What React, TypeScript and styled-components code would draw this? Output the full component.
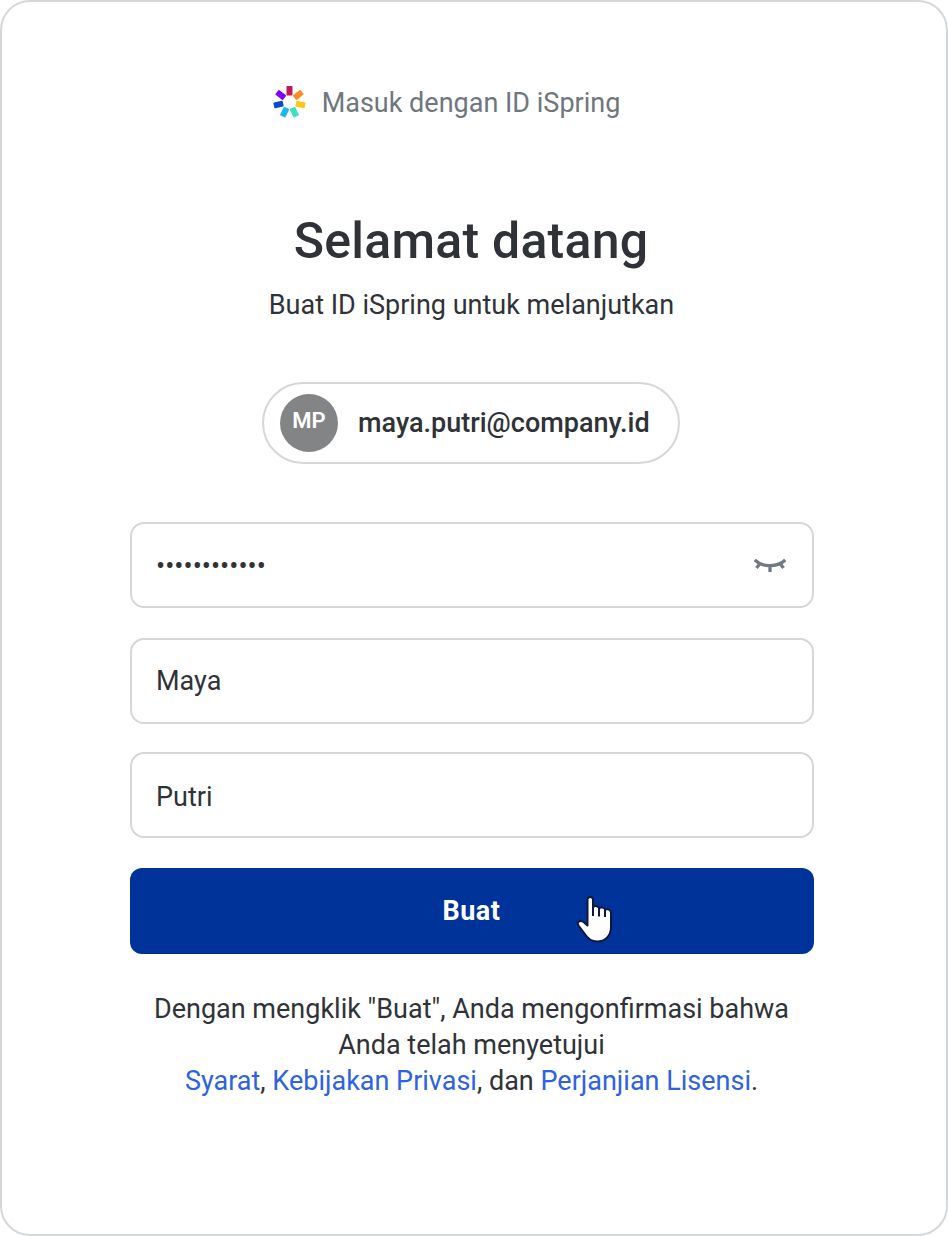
import { FC } from "react";
import styled, { createGlobalStyle } from "styled-components";

const GlobalStyle = createGlobalStyle`
  *, *::before, *::after {
    box-sizing: border-box;
  }

  body {
    margin: 0;
    background: #fff;
    color: #2f3337;
    font-family: Roboto, "Liberation Sans", sans-serif;
    font-size: 27px;
  }
`;

const Card = styled.main`
  width: 948px;
  height: 1236px;
  padding: 81px 133px 0 127px;
  border: 2px solid #d6d7d8;
  border-radius: 30px;
  background: #fff;
  display: flex;
  flex-direction: column;
  align-items: center;
`;

const Brand = styled.div`
  display: flex;
  align-items: center;
  gap: 16px;
  height: 40px;
  margin-right: 50px;
  color: #6f767e;
`;

const Text = styled.span<{ spacing?: number }>`
  white-space: nowrap;
  letter-spacing: ${props => props.spacing || 0}px;
`;

const Title = styled.h1`
  margin: 88px 0 0;
  font-size: 50px;
  font-weight: 500;
  line-height: 60px;
`;

const Subtitle = styled.p`
  margin: 16px 0 0;
  padding-left: 1px;
  line-height: 36px;
`;

const Account = styled.div`
  display: flex;
  align-items: center;
  width: 418px;
  height: 82px;
  margin-top: 59px;
  padding-left: 16px;
  border: 2px solid #d6d7d8;
  border-radius: 41px;
  font-weight: 500;
`;

const Avatar = styled.div`
  width: 58px;
  height: 58px;
  margin-right: 20px;
  padding-bottom: 5px;
  border-radius: 50%;
  background: #838485;
  color: #fff;
  font-size: 22px;
  font-weight: 600;
  display: flex;
  align-items: center;
  justify-content: center;
`;

const Form = styled.form`
  display: flex;
  flex-direction: column;
  width: 684px;
  margin: 58px 0 0 2px;
`;

const Field = styled.label<{ gap?: number; drop?: number }>`
  display: flex;
  align-items: center;
  height: 86px;
  margin-bottom: ${props => props.gap || 30}px;
  padding: ${props => props.drop || 0}px 26px 0 24px;
  border: 2px solid #d6d7d8;
  border-radius: 14px;
`;

const Input = styled.input`
  flex: 1;
  min-width: 0;
  padding: 0;
  border: 0;
  outline: 0;
  background: none;
  color: inherit;
  font: inherit;
`;

const Dots = styled.span`
  flex: 1;
  letter-spacing: 0.05px;
`;

const Submit = styled.button`
  display: flex;
  align-items: center;
  justify-content: center;
  position: relative;
  height: 86px;
  padding: 0 1px 0 0;
  border: 0;
  border-radius: 12px;
  background: #003399;
  color: #fff;
  font: inherit;
  font-weight: 700;
`;

const Pointer = styled.svg`
  position: absolute;
  left: 446px;
  top: 27px;
`;

const Terms = styled.p`
  margin: 37px 0 0;
  padding-left: 1px;
  line-height: 36px;
  text-align: center;
`;

const Link = styled.a`
  color: #2f62e0;
  text-decoration: none;
`;

const petals = ["#c2185b", "#ff8a1f", "#ffc61a", "#3de0c0", "#1fb5f0", "#0b4bd0", "#8000ff"];

const Logo: FC = () => (
  <svg width="34" height="34" viewBox="-17.5 -16 34 34" aria-hidden="true">
    {petals.map((color, i) => (
      <rect key={color} x="-3" y="-16" width="6" height="9.5" rx="0.8" fill={color} transform={`rotate(${(i * 360) / 7})`} />
    ))}
  </svg>
);

const ClosedEye: FC = () => (
  <svg width="32" height="18" viewBox="0 1 32 18" fill="none" stroke="#717982" strokeWidth="3.3" aria-label="Tampilkan kata sandi">
    <path d="M.8 4C8 11.5 24 11.5 31.200 4M2.500 12l3.800-4.800M29.500 12l-3.800-4.800M16 9.500v6.500" />
  </svg>
);

const Hand: FC = () => (
  <Pointer width="38" height="50" viewBox="0 0 38 50" aria-hidden="true">
    <path
      d="M11.500 4.500C11.500 1 17 1 17 4.500V12c2-1.500 5.500-1 6 1 2-1 5.500-.5 6 1.500 3-1 6 .2 6 3.500v14c0 9-6 14.500-14 14.500-6 0-9.500-3-12.500-8L2.500 30.500C0 26.500 4.500 25 7.500 27l4 3.500z"
      fill="#fff"
      stroke="#10183a"
      strokeWidth="2"
      strokeLinejoin="round"
    />
    <path d="M17 11v10M23 13v8.500M29 14.500v7.500" stroke="#10183a" strokeWidth="2" />
  </Pointer>
);

const App: FC = () => {
  return (
    <>
      <GlobalStyle />
      <Card>
        <Brand>
          <Logo />
          <Text>Masuk dengan ID iSpring</Text>
        </Brand>
        <Title><Text spacing={0.25}>Selamat datang</Text></Title>
        <Subtitle><Text>Buat ID iSpring untuk melanjutkan</Text></Subtitle>
        <Account>
          <Avatar>MP</Avatar>
          <Text>maya.putri@company.id</Text>
        </Account>
        <Form onSubmit={e => e.preventDefault()}>
          <Field drop={2}>
            <Dots>••••••••••••</Dots>
            <ClosedEye />
          </Field>
          <Field gap={28}>
            <Input aria-label="Nama depan" defaultValue="Maya" />
          </Field>
          <Field drop={3}>
            <Input aria-label="Nama belakang" defaultValue="Putri" />
          </Field>
          <Submit type="submit">
            <Text spacing={0.5}>Buat</Text>
            <Hand />
          </Submit>
        </Form>
        <Terms>
          <Text>Dengan mengklik "Buat", Anda mengonfirmasi bahwa</Text><br />
          <Text>Anda telah menyetujui</Text><br />
          <Text>
            <Link href="#">Syarat</Link>, <Link href="#">Kebijakan Privasi</Link>, dan <Link href="#">Perjanjian Lisensi</Link>.
          </Text>
        </Terms>
      </Card>
    </>
  );
};

export default App;
